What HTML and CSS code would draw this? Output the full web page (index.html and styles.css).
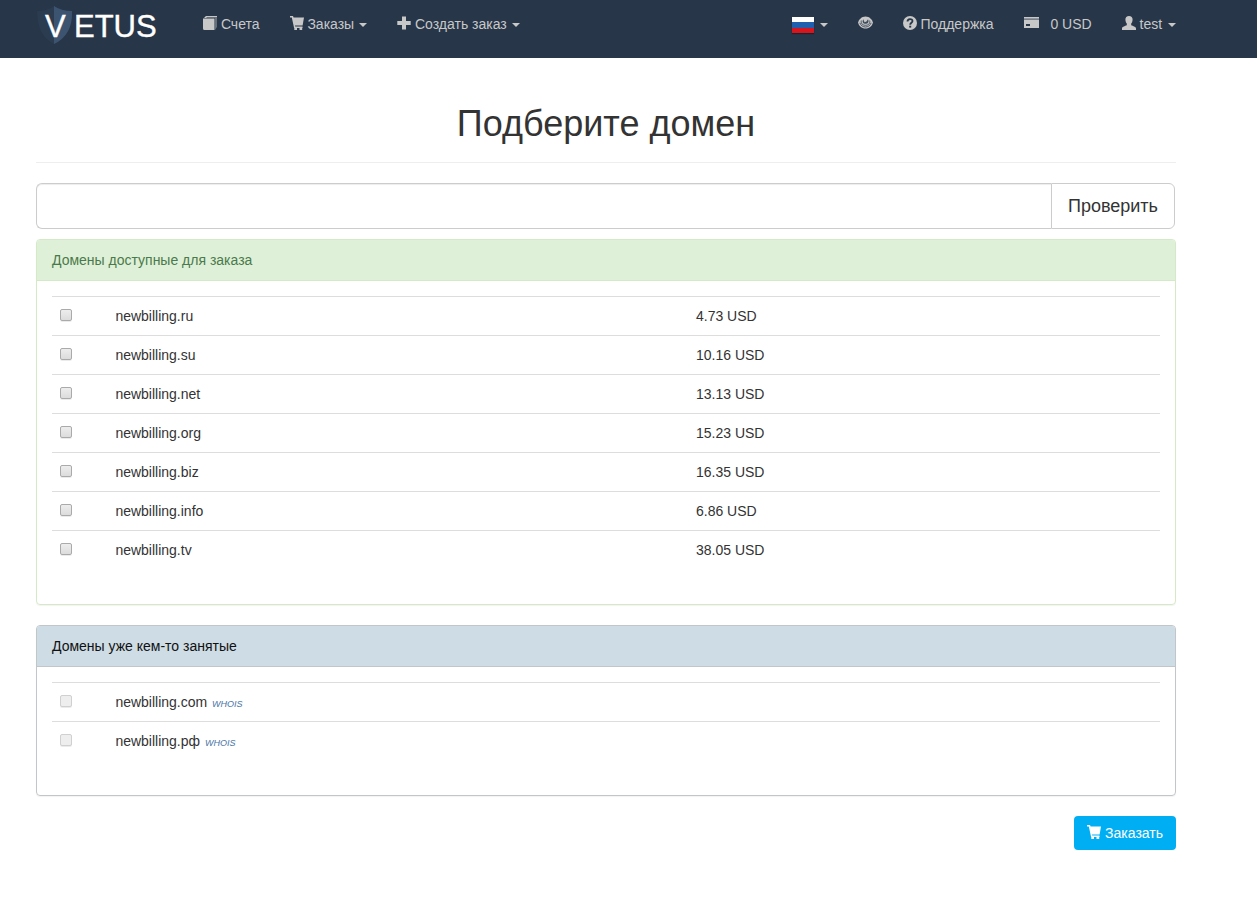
FILE: index.html
```html
<!DOCTYPE html>
<html lang="ru">
<head>
    <meta charset="UTF-8">
    <meta name="viewport" content="width=device-width, initial-scale=1.0">
    <title>Vetus</title>
    <link rel="stylesheet" href="styles.css">
</head>
<body>
    <!-- icons shared by the menu and the order button -->
    <svg class="sprite" aria-hidden="true">
        <symbol id="i-book" viewBox="0 0 14 14">
            <path d="M3 0h11v11l-2 3V2H2z" opacity=".4"/>
            <path d="M0 2.500h11.500V14H1.500Q0 14 0 12.500zM1 2l2-2h11v1H4L3 2z"/>
        </symbol>
        <symbol id="i-cart" viewBox="0 0 14 14">
            <path d="M0 0h3l.6 1.500H14L12.600 9.500H5l.2 1h7.300v1.500H4.100L1.800 1.500H0z"/>
            <path d="M4.300 11.500h2.700V14H4.300zM9.500 11.500h2.700V14H9.500z"/>
        </symbol>
        <symbol id="i-plus" viewBox="0 0 14 14">
            <path d="M5 0.500h4v4.500h4.700v4H9v4.500H5V9H.3V5H5z"/>
        </symbol>
        <symbol id="i-eye" viewBox="0 0 15 14">
            <path d="M7.500.5C3.500.5 1 3.500 0 6.500c1 3.500 3.500 6 7.500 6s6.500-2.500 7.500-6c-1-3-3.500-6-7.500-6z"/>
            <path d="M3.300 4.500C2.700 7.700 4.800 9.300 7.500 9.300s4.800-1.600 4.200-4.800M1.800 6.800c1 2.700 3.200 4.200 5.700 4.200s4.700-1.500 5.700-4.200" fill="none" stroke="#273648" stroke-width=".8"/>
            <path d="M5.300 3.200C3.700 6 5.300 7.800 7.500 7.800s4-1.800 2.500-4.600L8.500 5.500 6.500 6.200z" fill="#273648" opacity=".85"/>
        </symbol>
        <symbol id="i-help" viewBox="0 0 14 14">
            <circle cx="7" cy="7" r="7"/>
            <path d="M4.500 5.500C4.500 2.300 9.500 2.300 9.500 5c0 1.700-2.300 1.700-2.300 3.700" fill="none" stroke="#273648" stroke-width="1.800"/>
            <path d="M6.200 9.700h2v1.900h-2z" fill="#273648"/>
        </symbol>
        <symbol id="i-card" viewBox="0 0 15 14">
            <path fill-rule="evenodd" d="M0 4h15v8H0zM2 8v2h4V8z"/>
            <path d="M0 1h15v1.600H0z"/>
            <path d="M0 2.600h15V4H0z" opacity=".5"/>
        </symbol>
        <symbol id="i-user" viewBox="0 0 14 14">
            <path d="M7 0c2.200 0 3.800 1.500 3.600 3.800C10.500 5.700 9.800 7 9.200 7.600v1.700c1.800.8 4.800 1.500 4.800 3.200V14H0v-1.500c0-1.700 3-2.400 4.800-3.200V7.600C4.200 7 3.500 5.700 3.400 3.800 3.200 1.500 4.800 0 7 0z"/>
        </symbol>
    </svg>

    <nav class="navbar">
        <div class="container navbar-inner">
            <a class="brand" href="#" aria-label="Vetus">
                <svg width="122" height="48" viewBox="0 0 122 48">
                    <path d="M1 11Q11 11 18 6v38Q1 36 1 11z" fill="#2b3b50"/>
                    <path d="M18 6q7 5 18 5Q37 35 18 44z" fill="#3d5471"/>
                    <text class="brand-text" x="9" y="37">V</text>
                    <text class="brand-text" x="38" y="37">ETUS</text>
                </svg>
            </a>
            <ul class="menu">
                <li><a href="#"><svg class="icon"><use href="#i-book"/></svg> Счета</a></li>
                <li><a href="#"><svg class="icon"><use href="#i-cart"/></svg> Заказы <span class="caret"></span></a></li>
                <li><a href="#"><svg class="icon"><use href="#i-plus"/></svg> Создать заказ <span class="caret"></span></a></li>
            </ul>
            <ul class="menu menu-right">
                <li><a href="#" aria-label="Русский"><span class="flag"></span> <span class="caret"></span></a></li>
                <li><a href="#" aria-label="Просмотр"><svg class="icon icon-wide"><use href="#i-eye"/></svg></a></li>
                <li><a href="#"><svg class="icon"><use href="#i-help"/></svg> Поддержка</a></li>
                <li><a href="#"><svg class="icon icon-wide"><use href="#i-card"/></svg> <span class="balance">0 USD</span></a></li>
                <li><a href="#"><svg class="icon"><use href="#i-user"/></svg> test <span class="caret"></span></a></li>
            </ul>
        </div>
    </nav>

    <main class="container">
        <div class="page-header">
            <h1>Подберите домен</h1>
        </div>

        <form class="search">
            <input type="text" class="search-input" aria-label="Домен">
            <button type="button" class="search-btn">Проверить</button>
        </form>

        <div class="panel panel-success">
            <div class="panel-heading">Домены доступные для заказа</div>
            <div class="panel-body">
                <table class="table">
                    <tr><td><input type="checkbox" id="d-ru"></td><td><label for="d-ru">newbilling.ru</label></td><td>4.73 USD</td></tr>
                    <tr><td><input type="checkbox" id="d-su"></td><td><label for="d-su">newbilling.su</label></td><td>10.16 USD</td></tr>
                    <tr><td><input type="checkbox" id="d-net"></td><td><label for="d-net">newbilling.net</label></td><td>13.13 USD</td></tr>
                    <tr><td><input type="checkbox" id="d-org"></td><td><label for="d-org">newbilling.org</label></td><td>15.23 USD</td></tr>
                    <tr><td><input type="checkbox" id="d-biz"></td><td><label for="d-biz">newbilling.biz</label></td><td>16.35 USD</td></tr>
                    <tr><td><input type="checkbox" id="d-info"></td><td><label for="d-info">newbilling.info</label></td><td>6.86 USD</td></tr>
                    <tr><td><input type="checkbox" id="d-tv"></td><td><label for="d-tv">newbilling.tv</label></td><td>38.05 USD</td></tr>
                </table>
            </div>
        </div>

        <div class="panel panel-taken">
            <div class="panel-heading">Домены уже кем-то занятые</div>
            <div class="panel-body">
                <table class="table">
                    <tr><td><input type="checkbox" id="d-com" disabled></td><td><label for="d-com">newbilling.com</label> <a class="whois" href="#">WHOIS</a></td><td></td></tr>
                    <tr><td><input type="checkbox" id="d-rf" disabled></td><td><label for="d-rf">newbilling.рф</label> <a class="whois" href="#">WHOIS</a></td><td></td></tr>
                </table>
            </div>
        </div>

        <div class="actions">
            <button type="button" class="order-btn"><svg class="icon"><use href="#i-cart"/></svg> Заказать</button>
        </div>
    </main>
</body>
</html>
```

FILE: styles.css
```css
* {
    box-sizing: border-box;
}

body {
    margin: 0;
    font-family: "Liberation Sans", Arial, sans-serif;
    font-size: 14px;
    line-height: 20px;
    color: #333;
    background-color: #fff;
}

.sprite {
    display: none;
}

.container {
    max-width: 1257px;
    padding-left: 36px;
    padding-right: 81px;
}

/* top menu */
.navbar {
    background-color: #273648;
}

.navbar-inner {
    display: flex;
    min-height: 58px;
    padding-right: 66px;
}

.brand {
    width: 122px;
    margin-right: 30px;
}

.brand svg {
    display: block;
}

.brand-text {
    font-size: 31px;
    fill: #fff;
    stroke: #fff;
    stroke-width: .4px;
}

.menu {
    display: flex;
    margin: 0;
    padding: 0;
    list-style: none;
}

.menu-right {
    margin-left: auto;
}

.menu a {
    display: block;
    padding: 14px 15px;
    color: #c8c8c8;
    text-decoration: none;
    white-space: nowrap;
}

.menu a:hover {
    color: #fff;
}

.icon {
    display: inline-block;
    width: 14px;
    height: 14px;
    vertical-align: -1px;
    fill: currentColor;
}

.icon-wide {
    width: 15px;
}

.caret {
    display: inline-block;
    margin-left: 1px;
    vertical-align: middle;
    border-top: 4px solid;
    border-left: 4px solid transparent;
    border-right: 4px solid transparent;
}

.menu-right .caret {
    margin-left: 2px;
}

.flag {
    display: inline-block;
    width: 22px;
    height: 16px;
    vertical-align: -4px;
    background: linear-gradient(#fff 0 33%, #1f5fae 33% 66%, #d8151d 66%);
    box-shadow: 0 1px 1px #1a2431;
}

.balance {
    margin-left: 8px;
}

/* heading and search */
.page-header {
    margin: 46px 0 20px;
    padding-bottom: 18px;
    border-bottom: 1px solid #eee;
    text-align: center;
}

h1 {
    margin: 0;
    font-size: 36px;
    font-weight: 500;
    line-height: 40px;
}

.search {
    display: flex;
    height: 46px;
    margin-right: 1px;
    margin-bottom: 10px;
}

.search-input {
    flex: 1;
    min-width: 0;
    padding: 10px 16px;
    border: 1px solid #ccc;
    border-right: 0;
    border-radius: 6px 0 0 6px;
    font: inherit;
    font-size: 18px;
    box-shadow: inset 0 1px 1px rgba(0, 0, 0, .075);
}

.search-btn {
    padding: 0 16px;
    border: 1px solid #ccc;
    border-radius: 0 6px 6px 0;
    background-color: #fff;
    color: #333;
    font: inherit;
    font-size: 18px;
    cursor: pointer;
}

/* domain lists */
.panel {
    margin-bottom: 20px;
    border: 1px solid #d6e9c6;
    border-radius: 4px;
    box-shadow: 0 1px 1px rgba(0, 0, 0, .05);
}

.panel-heading {
    padding: 10px 15px;
    border-bottom: 1px solid #d6e9c6;
    border-radius: 3px 3px 0 0;
    background-color: #dff0d8;
    color: #4a7a4b;
}

.panel-taken,
.panel-taken .panel-heading {
    border-color: #c3c6c9;
}

.panel-taken .panel-heading {
    background-color: #cddce5;
    color: #111;
}

.panel-body {
    padding: 15px;
}

.table {
    width: 100%;
    margin-bottom: 20px;
    border-spacing: 0;
    table-layout: fixed;
}

.table td {
    padding: 8px;
    border-top: 1px solid #ddd;
    line-height: 22px;
    vertical-align: top;
}

.table td:first-child {
    width: 5%;
}

.table td:nth-child(2) {
    width: 52.4%;
}

.table input {
    appearance: none;
    display: block;
    width: 12px;
    height: 12px;
    margin: 4px 0 0;
    border: 1px solid #aaa;
    border-radius: 2px;
    background: linear-gradient(#ededed, #dcdcdc);
    box-shadow: 0 1px 0 rgba(0, 0, 0, .08);
}

.table input:checked {
    background: #4a75a5;
}

.table input:disabled {
    border-color: #d0d0d0;
    background: #eee;
}

.whois {
    margin-left: 1px;
    color: #4a75a5;
    font-size: 9px;
    font-style: italic;
    line-height: 10px;
    text-decoration: none;
}

.actions {
    text-align: right;
}

.order-btn {
    height: 34px;
    padding: 0 13px;
    border: 0;
    border-radius: 4px;
    background-color: #00aef3;
    color: #fff;
    font: inherit;
    cursor: pointer;
}
```
